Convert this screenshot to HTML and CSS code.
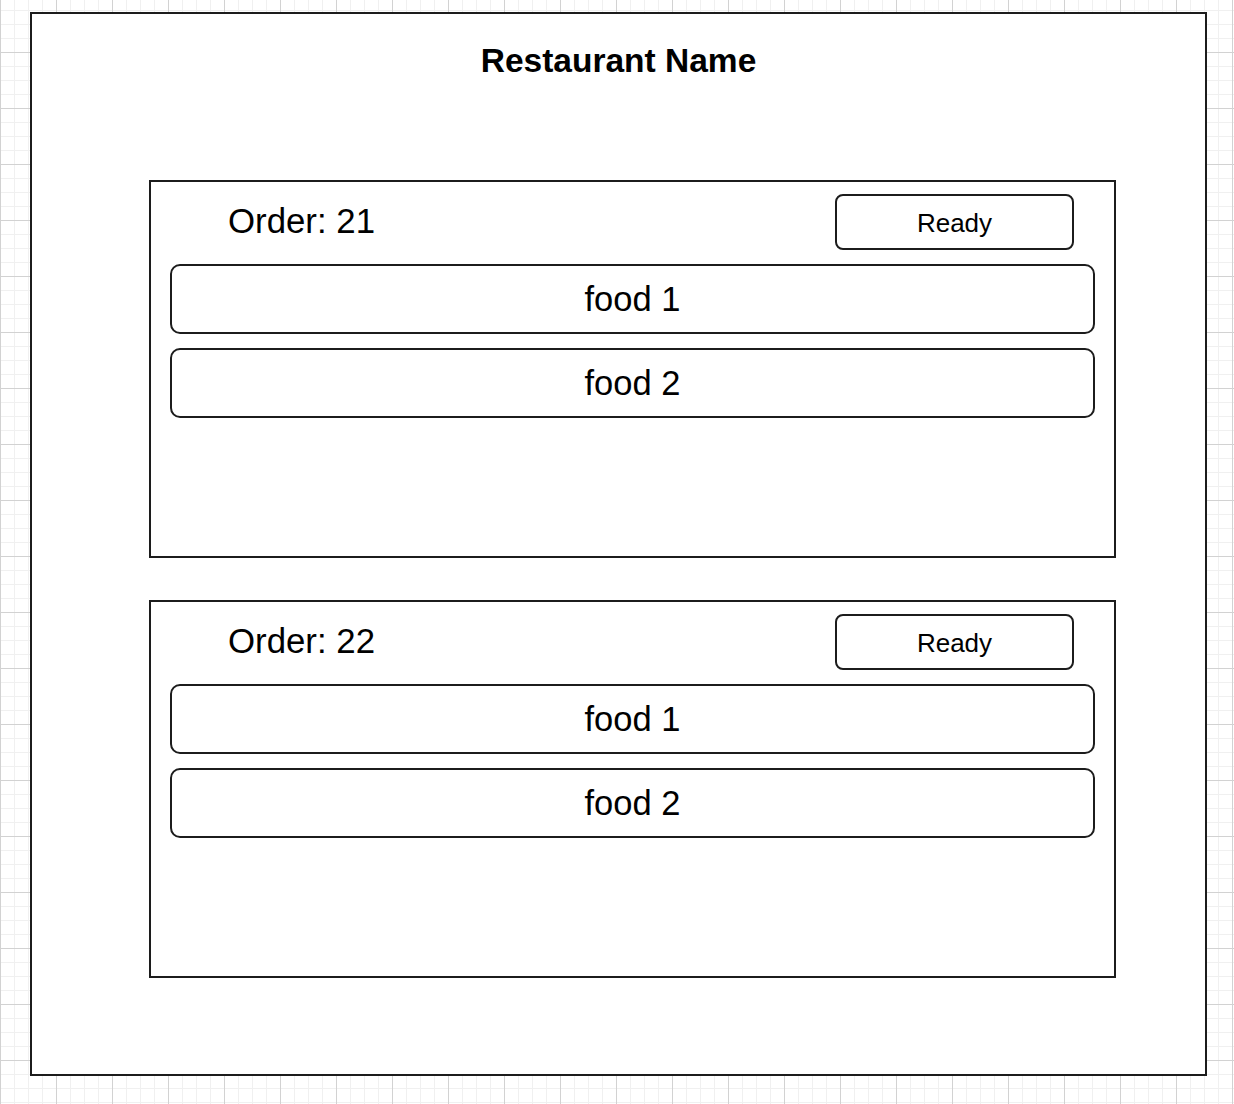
FILE: index.html
```html
<!DOCTYPE html>
<html lang="en">
<head>
    <meta charset="UTF-8">
    <meta name="viewport" content="width=device-width, initial-scale=1.0">
    <title>Restaurant Name | Orders</title>
    <link rel="stylesheet" href="styles.css">
</head>
<body>

    <div class="frame">
        <h1 class="title">Restaurant Name</h1>

        <div class="orders">
            <div class="order">
                <div class="order-head">
                    <span class="order-num">Order: 21</span>
                    <button class="ready-btn">Ready</button>
                </div>
                <div class="food">food 1</div>
                <div class="food">food 2</div>
            </div>

            <div class="order">
                <div class="order-head">
                    <span class="order-num">Order: 22</span>
                    <button class="ready-btn">Ready</button>
                </div>
                <div class="food">food 1</div>
                <div class="food">food 2</div>
            </div>
        </div>
    </div>

</body>
</html>
```

FILE: styles.css
```css
* {
    box-sizing: border-box;
}
html, body {
    height: 100%;
}
body {
    margin: 0;
    padding: 12px 0 0 30px;
    font-family: "Liberation Sans", Arial, Helvetica, sans-serif;
    color: #000;
    background-color: #fff;
    background-image:
        linear-gradient(to right, #d2d2d2 1px, transparent 1px),
        linear-gradient(to bottom, #d2d2d2 1px, transparent 1px),
        linear-gradient(to right, #f0f0f0 1px, transparent 1px),
        linear-gradient(to bottom, #f0f0f0 1px, transparent 1px);
    background-size: 56px 56px, 56px 56px, 14px 14px, 14px 14px;
    background-position: 0 0, 0 52px, 0 0, 0 10px;
}
.frame {
    width: 1177px;
    height: 1064px;
    background: #fff;
    border: 2px solid #1c1c1c;
    padding-top: 28px;
}
.title {
    margin: 0;
    font-size: 33.5px;
    line-height: 38px;
    font-weight: bold;
    text-align: center;
}
.orders {
    margin: 100px 0 0 117px;
    display: flex;
    flex-direction: column;
    gap: 42px;
}
.order {
    width: 967px;
    height: 378px;
    border: 2px solid #1c1c1c;
    padding: 12px 19px 0 19px;
    display: flex;
    flex-direction: column;
    gap: 14px;
}
.order-head {
    height: 56px;
    display: flex;
    justify-content: space-between;
    align-items: center;
    padding: 0 21px 0 58px;
}
.order-num {
    font-size: 34.8px;
    line-height: 40px;
    margin-top: -2px;
}
.ready-btn {
    width: 239px;
    height: 56px;
    background: #fff;
    border: 2px solid #1c1c1c;
    border-radius: 8px;
    font-family: inherit;
    font-size: 26px;
    color: #000;
    padding: 3px 0 0 0;
    cursor: pointer;
}
.food {
    height: 70px;
    border: 2px solid #1c1c1c;
    border-radius: 10px;
    display: flex;
    align-items: center;
    justify-content: center;
    font-size: 34.5px;
}
```
